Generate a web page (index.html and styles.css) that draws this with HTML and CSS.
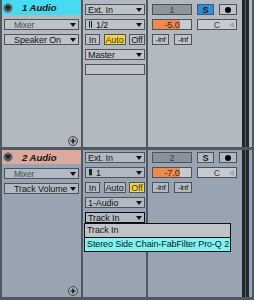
FILE: index.html
```html
<!DOCTYPE html>
<html lang="en">
<head>
  <meta charset="UTF-8" />
  <meta name="viewport" content="width=device-width, initial-scale=1.0"/>
  <title>Session Mixer</title>
  <link rel="stylesheet" href="styles.css">
</head>
<body>
  <div class="mixer">

    <div class="track track-1">
      <div class="head">
        <div class="title">
          <svg class="fold" width="10" height="10" viewBox="0 0 10 10">
            <circle cx="5" cy="5" r="4.5" fill="#50565d" stroke="#8f959c" stroke-width="1"/>
            <polygon points="2.6,3.6 7.4,3.6 5,6.8" fill="#000"/>
          </svg>
          <span>1 Audio</span>
        </div>
        <div class="drop faint">Mixer</div>
        <div class="drop">Speaker On</div>
        <svg class="add" width="10" height="10" viewBox="0 0 10 10">
          <circle cx="5" cy="5" r="4.5" fill="#a7aeb6" stroke="#434a52" stroke-width="1"/>
          <path d="M5 2.5v5M2.5 5h5" stroke="#000" stroke-width="1.2"/>
        </svg>
      </div>

      <div class="io">
        <div class="drop">Ext. In</div>
        <div class="drop"><span class="chan stereo"></span>1/2</div>
        <div class="monitor">
          <span class="btn in">In</span>
          <span class="btn auto lit">Auto</span>
          <span class="btn off">Off</span>
        </div>
        <div class="drop">Master</div>
        <div class="box"></div>
      </div>

      <div class="mix">
        <div class="controls">
          <div class="row">
            <span class="num">1</span>
            <span class="btn solo blue">S</span>
            <span class="btn arm"><b></b></span>
          </div>
          <div class="row">
            <span class="vol"><span class="fill" style="width: 72%"></span><em>-5.0</em></span>
            <span class="pan">C</span>
          </div>
          <div class="row">
            <span class="peak">-inf</span>
            <span class="peak wide">-inf</span>
          </div>
        </div>
        <div class="meter"><i></i><i></i></div>
      </div>
    </div>

    <div class="track track-2">
      <div class="head">
        <div class="title">
          <svg class="fold" width="10" height="10" viewBox="0 0 10 10">
            <circle cx="5" cy="5" r="4.5" fill="#50565d" stroke="#8f959c" stroke-width="1"/>
            <polygon points="2.6,3.6 7.4,3.6 5,6.8" fill="#000"/>
          </svg>
          <span>2 Audio</span>
        </div>
        <div class="drop faint">Mixer</div>
        <div class="drop">Track Volume</div>
        <svg class="add" width="10" height="10" viewBox="0 0 10 10">
          <circle cx="5" cy="5" r="4.5" fill="#a7aeb6" stroke="#434a52" stroke-width="1"/>
          <path d="M5 2.5v5M2.5 5h5" stroke="#000" stroke-width="1.2"/>
        </svg>
      </div>

      <div class="io">
        <div class="drop">Ext. In</div>
        <div class="drop"><span class="chan mono"></span>1</div>
        <div class="monitor">
          <span class="btn in">In</span>
          <span class="btn auto">Auto</span>
          <span class="btn off lit">Off</span>
        </div>
        <div class="drop">1-Audio</div>
        <div class="drop open">Track In</div>
      </div>

      <div class="mix">
        <div class="controls">
          <div class="row">
            <span class="num">2</span>
            <span class="btn solo">S</span>
            <span class="btn arm"><b></b></span>
          </div>
          <div class="row">
            <span class="vol"><span class="fill" style="width: 72%"></span><em>-7.0</em></span>
            <span class="pan">C</span>
          </div>
          <div class="row">
            <span class="peak">-inf</span>
            <span class="peak wide">-inf</span>
          </div>
        </div>
        <div class="meter"><i></i><i></i></div>
      </div>
    </div>

    <ul class="menu">
      <li>Track In</li>
      <li class="hover">Stereo Side Chain-FabFilter Pro-Q 2</li>
    </ul>
  </div>
</body>
</html>
```

FILE: styles.css
```css
* {
  margin: 0;
  padding: 0;
  box-sizing: border-box;
}

body {
  background: #4f5760;
  font-family: "Liberation Sans", Arial, sans-serif;
  font-size: 9px;
  letter-spacing: -0.1px;
  color: #151515;
  overflow: hidden;
}

.mixer {
  position: relative;
  width: 254px;
  height: 300px;
  display: flex;
  flex-direction: column;
  gap: 3px;
}

.track {
  --bg: #b3b9c0;
  --box: #bec3c9;
  --top: 4px;
  --head: 15px;
  display: flex;
  gap: 2px;
  height: 147px;
  padding: 0 2px;
}

.track-2 {
  --bg: #98a4b1;
  --box: #b1b9c2;
  --top: 2px;
  --head: 14px;
}

.head,
.io,
.mix {
  background: var(--bg);
}

/* track header column */
.head {
  width: 79px;
  display: flex;
  flex-direction: column;
  gap: 4px;
}

.title {
  height: var(--head);
  display: flex;
  align-items: center;
  padding-left: 1px;
  gap: 9px;
  font-size: 9.5px;
  font-weight: bold;
  font-style: italic;
  letter-spacing: 0;
  color: #111;
}

.track-1 .title { background: #45dcf1; }
.track-2 .title { background: #dca99f; }

.head .drop {
  margin: 0 2px;
  padding-left: 9px;
}

.drop.faint {
  color: #4a4d52;
  font-size: 8.5px;
}

.add {
  margin-top: auto;
  margin-bottom: 1px;
  align-self: flex-end;
  margin-right: 3px;
}

/* boxes */
.drop,
.box,
.btn,
.num,
.vol,
.pan,
.peak {
  height: 11px;
  border: 1px solid #4c535b;
  background: var(--box);
  display: flex;
  align-items: center;
  white-space: nowrap;
}

.drop {
  padding: 0 2px;
}

.drop::after {
  content: "";
  margin-left: auto;
  border-left: 3px solid transparent;
  border-right: 3px solid transparent;
  border-top: 4px solid #111;
}

.drop.open {
  border-color: #0c0c0c;
}

/* input / output column */
.io {
  width: 63px;
  display: flex;
  flex-direction: column;
  gap: 4px;
  padding: var(--top) 1px 0 2px;
}

.chan {
  width: 3px;
  height: 7px;
  margin: 0 4px 0 1px;
}

.chan.stereo {
  background:
    linear-gradient(#1d2024, #1d2024) 0 0 / 1px 6px no-repeat,
    linear-gradient(#2ec24a, #2ec24a) 0 6px / 1px 1px no-repeat,
    linear-gradient(#1d2024, #1d2024) 2px 0 / 1px 7px no-repeat;
}

.chan.mono {
  background:
    linear-gradient(#1d2024, #1d2024) 0 0 / 3px 6px no-repeat,
    linear-gradient(#2ec24a, #2ec24a) 0 6px / 3px 1px no-repeat;
}

.monitor {
  display: flex;
  justify-content: space-between;
}

.btn {
  justify-content: center;
}

.btn.in { width: 15px; }
.btn.auto { width: 22px; }
.btn.off { width: 16px; }

.btn.lit {
  background: #f6d33a;
  color: #3a3a3a;
}

/* mixer column */
.mix {
  flex: 1;
  display: flex;
  padding: 0 3px 0 4px;
}

.controls {
  width: 85px;
  padding-top: var(--top);
}

.row {
  display: flex;
  gap: 5px;
  margin-bottom: 4px;
}

.num {
  width: 40px;
  justify-content: center;
  color: #3b3f44;
}

.track-1 .num { background: #8d959e; }
.track-2 .num { background: #88939f; }

.btn.solo {
  width: 17px;
  font-weight: bold;
  color: #1a1a1a;
}

.btn.blue {
  background: #2e8cdb;
}

.btn.arm {
  width: 18px;
}

.btn.arm b {
  width: 6px;
  height: 6px;
  border-radius: 50%;
  background: #050505;
}

.vol {
  position: relative;
  width: 40px;
  justify-content: center;
  background: #c7cbd0;
  overflow: hidden;
}

.vol .fill {
  position: absolute;
  left: 0;
  top: 0;
  bottom: 0;
  background: #ee8a4e;
}

.vol em {
  position: relative;
  font-style: normal;
  color: #2a2a2a;
}

.pan {
  width: 40px;
  justify-content: center;
  background: #c7cbd0;
  color: #3a3d41;
  position: relative;
}

.pan::after {
  content: "";
  position: absolute;
  right: 2px;
  top: 2px;
  border-top: 3px solid transparent;
  border-bottom: 3px solid transparent;
  border-right: 5px solid #a2a8af;
}

.peak {
  width: 17px;
  justify-content: center;
  font-size: 8px;
  letter-spacing: -0.3px;
}

.peak.wide { width: 18px; }

.meter {
  margin-left: auto;
  width: 7px;
  display: flex;
  gap: 1px;
  background: #5b636c;
}

.meter i {
  width: 3px;
  background: #22272c;
}

/* open chooser menu */
.menu {
  position: absolute;
  left: 84px;
  top: 223px;
  width: 147px;
  list-style: none;
  border: 1px solid #111;
  background: #111;
}

.menu li {
  height: 13px;
  line-height: 13px;
  padding-left: 2px;
  background: #c0c4c9;
  white-space: nowrap;
}

.menu li + li {
  margin-top: 1px;
}

.menu li.hover {
  background: #80f3f3;
}
```
